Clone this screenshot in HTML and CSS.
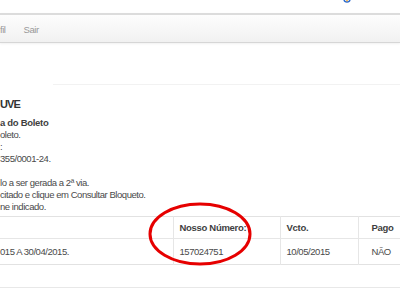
FILE: index.html
```html
<!DOCTYPE html>
<html lang="pt-BR">

<head>
    <meta charset="UTF-8">
    <meta name="viewport" content="width=device-width, initial-scale=1.0">
    <title>2ª via do Boleto</title>
    <link rel="stylesheet" href="styles.css">
</head>

<body>
    <!-- topo -->
    <div class="top">
        <svg class="logo" width="8" height="3" viewBox="0 0 8 3">
            <path d="M1 -1 A3 3 0 0 0 7 -1" fill="none" stroke="#2a6ad0" stroke-width="1.4" />
            <path d="M3 0.8 L5 0.8" stroke="#f0a020" stroke-width="1" />
        </svg>
    </div>

    <!-- menu -->
    <div class="nav">
        <a href="#">fil</a>
        <a href="#">Sair</a>
    </div>

    <div class="content">
        <div class="sep"></div>

        <h2 class="title">UVE</h2>

        <div class="info">
            <p class="sub">a do Boleto</p>
            <p>oleto.</p>
            <p>:</p>
            <p>355/0001-24.</p>
            <p>&nbsp;</p>
            <p>lo a ser gerada a 2ª via.</p>
            <p>citado e clique em Consultar Bloqueto.</p>
            <p>ne indicado.</p>
        </div>

        <!-- tabela -->
        <div class="tableWrap">
            <table class="boletos">
                <thead>
                    <tr>
                        <th class="c1"></th>
                        <th class="c2">Nosso Número:</th>
                        <th class="c3">Vcto.</th>
                        <th class="c4">Pago</th>
                    </tr>
                </thead>
                <tbody>
                    <tr>
                        <td class="c1">015 A 30/04/2015.</td>
                        <td class="c2">157024751</td>
                        <td class="c3">10/05/2015</td>
                        <td class="c4">NÃO</td>
                    </tr>
                </tbody>
            </table>
            <!-- marcação vermelha -->
            <svg class="mark" width="110" height="70" viewBox="0 0 110 70">
                <ellipse cx="54" cy="34" rx="50" ry="30" fill="none" stroke="#e60000" stroke-width="3" />
            </svg>
        </div>

        <div class="foot"></div>
    </div>
</body>

</html>
```

FILE: styles.css
```css
/* reset */
* {
    margin: 0;
    padding: 0;
    box-sizing: border-box;
}

body {
    font-family: "Liberation Sans", Arial, sans-serif;
    font-size: 9.5px;
    letter-spacing: -0.45px;
    color: #4a4a4a;
    background: #fff;
    width: 400px;
    overflow: hidden;
}

/* topo */
.top {
    height: 13px;
    padding-left: 343px;
}

.logo {
    display: block;
}

/* menu */
.nav {
    display: flex;
    align-items: center;
    gap: 18px;
    height: 30px;
    padding-top: 2px;
    border-top: 2px solid #dcdcdc;
    border-bottom: 1px solid #d6d6d6;
    background: linear-gradient(#fdfdfd, #f1f1f1);
    box-shadow: 0 1px 2px rgba(0, 0, 0, .06);
}

.nav a {
    color: #999;
    text-decoration: none;
    font-size: 9.5px;
}

/* conteudo */
.sep {
    margin: 41px 0 0 53px;
    border-top: 1px solid #f2f2f2;
}

.title {
    margin-top: 12px;
    font-size: 11px;
    letter-spacing: -0.9px;
    line-height: 14px;
    color: #333;
}

.info {
    margin-top: 6px;
}

.info p {
    line-height: 12px;
}

.info .sub {
    font-weight: bold;
    color: #3f3f3f;
    letter-spacing: -0.3px;
}

/* tabela */
.tableWrap {
    position: relative;
    margin-top: 3px;
}

.boletos {
    width: 100%;
    border-collapse: collapse;
    border-top: 1px solid #e2e2e2;
    border-bottom: 1px solid #e2e2e2;
}

.boletos th,
.boletos td {
    padding: 0 6px;
    text-align: left;
    border-left: 1px solid #e6e6e6;
}

.boletos th {
    height: 22px;
    font-weight: bold;
    color: #3f3f3f;
    letter-spacing: -0.3px;
    border-bottom: 1px solid #e6e6e6;
}

.boletos td {
    height: 26px;
}

.boletos .c1 {
    width: 173px;
    padding-left: 0;
    border-left: none;
}

.boletos .c2 {
    width: 107px;
}

.boletos .c3 {
    width: 78px;
}

.boletos .c4 {
    padding-left: 13px;
}

.mark {
    position: absolute;
    left: 145.5px;
    top: -16.5px;
}

.foot {
    margin-top: 22px;
    border-top: 1px solid #e8e8e8;
}
```
